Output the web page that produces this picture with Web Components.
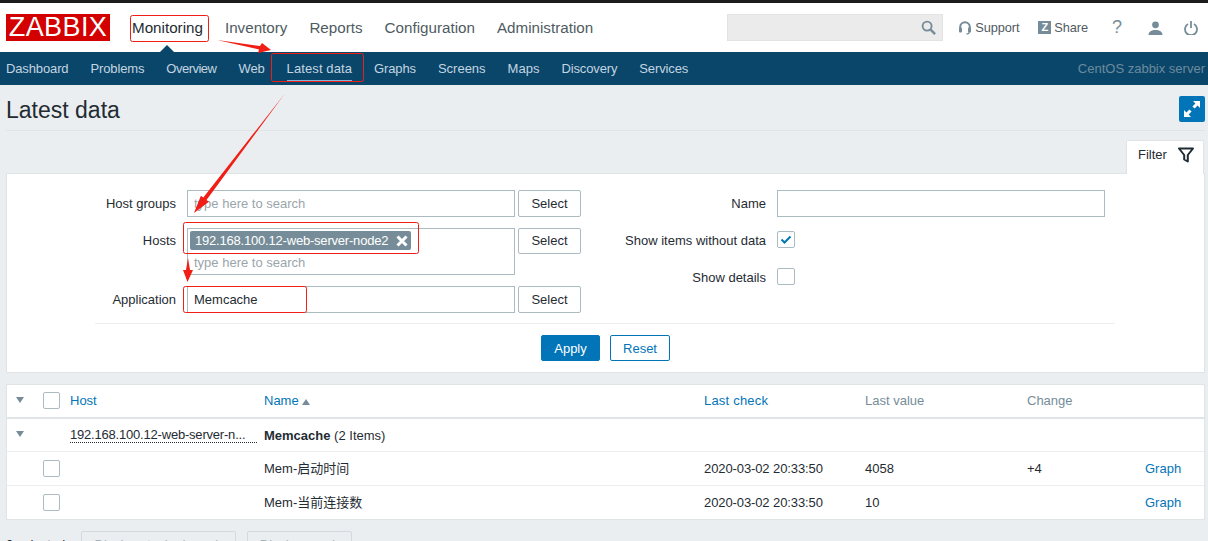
<!DOCTYPE html>
<html>
<head>
<meta charset="utf-8">
<title>Latest data</title>
<style>
    html, body {
        margin: 0;
        height: 541px;
        overflow: hidden;
        background-color: #ebeef0;
        font-family: "Liberation Sans", "Noto Sans CJK SC", Arial, sans-serif;
        font-size: 13px;
        color: #1f2c33;
    }
    a { color: inherit; text-decoration: none; }
    .sort {
        display: inline-block;
        margin-left: 3px;
        border: 4px solid transparent;
        border-top: 0;
        border-bottom: 6px solid #768d99;
    }
    .num { letter-spacing: -0.1px; }
</style>
</head>
<body>
<zbx-header></zbx-header>
<zbx-subnav server="CentOS zabbix server">
    <a>Dashboard</a><a>Problems</a><a style="letter-spacing:-0.5px">Overview</a><a>Web</a><a class="on" style="letter-spacing:0.1px">Latest data</a><a>Graphs</a><a style="letter-spacing:0">Screens</a><a style="letter-spacing:0">Maps</a><a>Discovery</a><a>Services</a>
</zbx-subnav>
<zbx-title>Latest data</zbx-title>
<zbx-filter></zbx-filter>
<zbx-table>
    <zbx-row kind="head">
        <span slot="host">Host</span>
        <span slot="name">Name<i class="sort"></i></span>
        <span slot="check" style="letter-spacing:0.2px">Last check</span>
        <span slot="value">Last value</span>
        <span slot="change">Change</span>
    </zbx-row>
    <zbx-row kind="group">
        <span slot="host">192.168.100.12-web-server-n...</span>
        <span slot="name"><b>Memcache</b> (2 Items)</span>
    </zbx-row>
    <zbx-row kind="item">
        <span slot="name">Mem-启动时间</span>
        <span slot="check" class="num">2020-03-02 20:33:50</span>
        <span slot="value">4058</span>
        <span slot="change">+4</span>
        <span slot="action">Graph</span>
    </zbx-row>
    <zbx-row kind="item">
        <span slot="name">Mem-当前连接数</span>
        <span slot="check" class="num">2020-03-02 20:33:50</span>
        <span slot="value">10</span>
        <span slot="action">Graph</span>
    </zbx-row>
</zbx-table>
<zbx-footer></zbx-footer>
<zbx-marks></zbx-marks>

<script>
class ZbxHeader extends HTMLElement {
    constructor() {
        super();
        this.attachShadow({ mode: 'open' }).innerHTML = `
            <style>
                :host {
                    display: flex;
                    align-items: center;
                    height: 49px;
                    border-top: 3px solid #1c1c1c;
                    background-color: #fff;
                    position: relative;
                }
                .logo {
                    width: 104px;
                    height: 27px;
                    margin-left: 6px;
                    background-color: #d40000;
                    color: #fff;
                    font-size: 27px;
                    line-height: 27px;
                    letter-spacing: 0.4px;
                    text-align: center;
                }
                nav { display: flex; gap: 22px; margin-left: 22px; font-size: 15.2px; color: #4f5b62; }
                nav a:first-child { color: #1f2c33; }
                .pointer {
                    position: absolute;
                    left: 160px;
                    bottom: 0;
                    border: 7px solid transparent;
                    border-top: 0;
                    border-bottom: 7px solid #0a466a;
                }
                .right { display: flex; align-items: center; margin-left: auto; color: #4f5b62; font-size: 12.8px; letter-spacing: -0.1px; }
                .search {
                    box-sizing: border-box;
                    width: 216px;
                    height: 27px;
                    margin-right: 16px;
                    background-color: #ebebeb;
                    border: 1px solid #e3e3e3;
                    display: flex;
                    align-items: center;
                    justify-content: flex-end;
                    padding-right: 6px;
                }
                .tool { display: flex; align-items: center; gap: 4px; }
                .z {
                    width: 13px;
                    height: 13px;
                    background-color: #768d99;
                    color: #fff;
                    font-weight: bold;
                    font-size: 11px;
                    line-height: 13px;
                    text-align: center;
                }
                svg { display: block; }
            </style>
            <div class="logo">ZABBIX</div>
            <nav>
                <a>Monitoring</a><a>Inventory</a><a>Reports</a><a>Configuration</a><a>Administration</a>
            </nav>
            <i class="pointer"></i>
            <div class="right">
                <div class="search">
                    <svg width="15" height="15" viewBox="0 0 16 16" fill="none" stroke="#768d99" stroke-width="2"><circle cx="6.500" cy="6.500" r="4.800"/><path d="M10 10l5 5" stroke-width="2.600"/></svg>
                </div>
                <div class="tool" style="margin-right:19px">
                    <svg width="12" height="14" viewBox="0 0 12 14" fill="none" stroke="#768d99" stroke-width="2"><path d="M1.200 8V6a4.800 4.800 0 0 1 9.600 0v2"/><rect x="0" y="6.500" width="3" height="5" rx="1" fill="#768d99" stroke="none"/><rect x="9" y="6.500" width="3" height="5" rx="1" fill="#768d99" stroke="none"/><path d="M10.300 11c0 1.400-1.400 2-3 2" stroke-width="1.200"/></svg>
                    <span>Support</span>
                </div>
                <div class="tool" style="margin-right:22px;gap:3px">
                    <span class="z">Z</span>
                    <span>Share</span>
                </div>
                <span style="width:14px;margin-right:24px;font-size:18px;color:#768d99;text-align:center">?</span>
                <svg style="margin-right:21px" width="15" height="14" viewBox="0 0 15 14" fill="#768d99"><circle cx="7.500" cy="3.800" r="3.400"/><path d="M0.500 14c0-3.500 3-5 7-5s7 1.500 7 5z"/></svg>
                <svg style="margin-right:10px" width="14" height="14" viewBox="0 0 14 14" fill="none" stroke="#768d99" stroke-width="1.800"><path d="M4 3a6 6 0 1 0 6 0"/><path d="M7 0v7"/></svg>
            </div>
        `;
    }
}

class ZbxSubnav extends HTMLElement {
    constructor() {
        super();
        this.attachShadow({ mode: 'open' }).innerHTML = `
            <style>
                :host {
                    display: flex;
                    align-items: center;
                    box-sizing: border-box;
                    height: 33px;
                    padding: 0 3px 1px 6px;
                    background-color: #0a466a;
                    color: #c3d5e0;
                    font-size: 13px;
                }
                .items { display: flex; gap: 22px; letter-spacing: -0.13px; }
                ::slotted(a.on) {
                    color: #fff;
                    box-shadow: 0 2px 0 #7fb5dc;
                    padding-bottom: 4px;
                    margin-bottom: -4px;
                }
                .server { margin-left: auto; color: #6c8b9d; }
            </style>
            <div class="items"><slot></slot></div>
            <span class="server"></span>
        `;
        this.shadowRoot.querySelector('.server').textContent = this.getAttribute('server');
    }
}

class ZbxTitle extends HTMLElement {
    constructor() {
        super();
        this.attachShadow({ mode: 'open' }).innerHTML = `
            <style>
                :host {
                    display: flex;
                    align-items: center;
                    justify-content: space-between;
                    height: 42px;
                    padding-top: 3px;
                    margin: 0 3px 0 6px;
                    border-bottom: 1px solid #dfe4e7;
                    font-size: 23px;
                    color: #1f2c33;
                }
                .text { padding-top: 2px; }
                .full {
                    width: 26px;
                    height: 26px;
                    background-color: #0275b8;
                    border-radius: 2px;
                }
                svg { display: block; }
            </style>
            <span class="text"><slot></slot></span>
            <div class="full">
                <svg width="26" height="26" viewBox="0 0 26 26" fill="#fff"><path d="M21 5v7l-2.400-2.400-3 3-2.200-2.200 3-3L14 5z"/><path d="M5 21v-7l2.400 2.400 3-3 2.200 2.200-3 3L12 21z"/></svg>
            </div>
        `;
    }
}

class ZbxField extends HTMLElement {
    constructor() {
        super();
        this.attachShadow({ mode: 'open' }).innerHTML = `
            <style>
                :host { display: contents; }
                label { text-align: right; line-height: 27px; color: #1f2c33; }
                :host([tall]) label { line-height: 25px; }
                .value { display: flex; align-items: flex-start; gap: 3px; min-height: 27px; }
            </style>
            <label></label>
            <div class="value"><slot></slot></div>
        `;
        this.shadowRoot.querySelector('label').textContent = this.getAttribute('label');
    }
}

class ZbxFilter extends HTMLElement {
    constructor() {
        super();
        this.attachShadow({ mode: 'open' }).innerHTML = `
            <style>
                :host { display: block; margin: 9px 3px 0 6px; }
                .tabs { display: flex; justify-content: flex-end; }
                .tab {
                    display: flex;
                    align-items: flex-start;
                    gap: 11px;
                    box-sizing: border-box;
                    width: 78px;
                    height: 34px;
                    margin-right: 1px;
                    margin-bottom: -1px;
                    padding: 6px 0 0 11px;
                    background-color: #fff;
                    border: 1px solid #dfe4e7;
                    border-bottom: 0;
                    border-radius: 2px 2px 0 0;
                    position: relative;
                    line-height: 16px;
                }
                .panel {
                    box-sizing: border-box;
                    height: 200px;
                    background-color: #fff;
                    border: 1px solid #dfe4e7;
                }
                .cols { display: flex; padding-top: 16px; }
                .form {
                    display: grid;
                    grid-template-columns: var(--label) auto;
                    column-gap: 11px;
                    align-content: start;
                }
                .left { --label: 169px; width: 574px; row-gap: 11px; }
                .right { --label: 185px; row-gap: 10px; }
                input {
                    box-sizing: border-box;
                    width: 328px;
                    height: 27px;
                    margin: 0;
                    padding: 0 6px;
                    border: 1px solid #acbbc2;
                    border-radius: 0;
                    outline: 0;
                    font: inherit;
                    color: #1f2c33;
                    background-color: #fff;
                }
                input::placeholder { color: #9aa5aa; opacity: 1; }
                .multi {
                    box-sizing: border-box;
                    width: 328px;
                    height: 47px;
                    border: 1px solid #acbbc2;
                    padding: 2px;
                }
                .tag {
                    display: inline-flex;
                    align-items: center;
                    height: 19px;
                    padding: 0 3px 0 5px;
                    gap: 8px;
                    background-color: #768d99;
                    color: #fff;
                    border-radius: 2px;
                    letter-spacing: -0.2px;
                }
                .tag svg { display: block; }
                .hint { color: #9aa5aa; padding: 5px 0 0 4px; line-height: 16px; }
                .sep { height: 1px; margin: 10px 89px 0 88px; background-color: #ebeef0; }
                .actions { display: flex; justify-content: center; gap: 10px; margin-top: 11px; }
                .check {
                    box-sizing: border-box;
                    width: 18px;
                    height: 17px;
                    margin-top: 4px;
                    border: 1px solid #acbbc2;
                    border-radius: 2px;
                }
                .check svg { display: block; }
                zbx-button.sel { width: 63px; }
            </style>
            <div class="tabs">
                <div class="tab">
                    <span>Filter</span>
                    <svg width="16" height="16" viewBox="0 0 16 16" fill="none" stroke="#1f2c33" stroke-width="2" stroke-linejoin="round"><path d="M1 1.500h14L9.800 8v6.500l-3.600-2V8z"/></svg>
                </div>
            </div>
            <div class="panel">
                <div class="cols">
                    <div class="form left">
                        <zbx-field label="Host groups"><input placeholder="type here to search"><zbx-button class="sel">Select</zbx-button></zbx-field>
                        <zbx-field label="Hosts" tall>
                            <div class="multi">
                                <span class="tag">192.168.100.12-web-server-node2
                                    <svg width="12" height="12" viewBox="0 0 12 12" stroke="#fff" stroke-width="3"><path d="M1.500 1.500l9 9M10.500 1.500l-9 9"/></svg>
                                </span>
                                <div class="hint">type here to search</div>
                            </div>
                            <zbx-button class="sel" style="height:26px;line-height:23px">Select</zbx-button>
                        </zbx-field>
                        <zbx-field label="Application"><input value="Memcache"><zbx-button class="sel">Select</zbx-button></zbx-field>
                    </div>
                    <div class="form right">
                        <zbx-field label="Name"><input></zbx-field>
                        <zbx-field label="Show items without data">
                            <div class="check"><svg width="16" height="15" viewBox="0 0 16 15" fill="none" stroke="#0275b8" stroke-width="2"><path d="M3.500 7.500l3 3 6-6"/></svg></div>
                        </zbx-field>
                        <zbx-field label="Show details"><div class="check"></div></zbx-field>
                    </div>
                </div>
                <div class="sep"></div>
                <div class="actions">
                    <zbx-button kind="primary" style="width:59px;height:26px">Apply</zbx-button>
                    <zbx-button kind="link" style="width:60px;height:26px">Reset</zbx-button>
                </div>
            </div>
        `;
    }
}

class ZbxButton extends HTMLElement {
    constructor() {
        super();
        this.attachShadow({ mode: 'open' }).innerHTML = `
            <style>
                :host {
                    display: inline-block;
                    box-sizing: border-box;
                    height: 27px;
                    line-height: 25px;
                    text-align: center;
                    flex: none;
                    border: 1px solid #acbbc2;
                    border-radius: 2px;
                    background-color: #fff;
                    color: #1f2c33;
                }
                :host([kind="primary"]) { background-color: #0275b8; border-color: #0275b8; color: #fff; }
                :host([kind="link"]) { border-color: #0275b8; color: #0275b8; }
                :host([kind="off"]) { background-color: #ebeef0; border-color: #d3dade; color: #a5b1b8; }
            </style>
            <slot></slot>
        `;
    }
}

class ZbxTable extends HTMLElement {
    constructor() {
        super();
        this.attachShadow({ mode: 'open' }).innerHTML = `
            <style>
                :host {
                    display: block;
                    margin: 11px 3px 0 6px;
                    background-color: #fff;
                    border: 1px solid #dfe4e7;
                }
            </style>
            <slot></slot>
        `;
    }
}

class ZbxRow extends HTMLElement {
    constructor() {
        super();
        const kind = this.getAttribute('kind');
        const arrow = kind === 'item' ? '' : '<i class="arrow"></i>';
        const box = kind === 'group' ? '' : '<i class="box"></i>';
        this.attachShadow({ mode: 'open' }).innerHTML = `
            <style>
                :host {
                    display: grid;
                    grid-template-columns: 36px 27px 194px 440px 161px 162px 118px 1fr;
                    align-items: center;
                    height: 33px;
                    line-height: 15px;
                    border-top: 1px solid #ebeef0;
                    color: #1f2c33;
                }
                :host([kind="head"]) {
                    height: 30px;
                    padding-bottom: 2px;
                    border-top: 0;
                    border-bottom: 2px solid #dfe4e7;
                    color: #768d99;
                }
                :host([kind="group"]) { height: 32px; border-top: 0; }
                .arrow {
                    display: block;
                    width: 0;
                    margin-left: 9px;
                    border: 4px solid transparent;
                    border-bottom: 0;
                    border-top: 6px solid #768d99;
                }
                :host([kind="group"]) .arrow { margin-top: -3px; }
                .box {
                    display: block;
                    box-sizing: border-box;
                    width: 17px;
                    height: 17px;
                    border: 1px solid #acbbc2;
                    border-radius: 2px;
                }
                :host([kind="group"]) ::slotted([slot="host"]) {
                    display: block;
                    width: 187px;
                    white-space: nowrap;
                    letter-spacing: -0.2px;
                    border-bottom: 1px dotted #1f2c33;
                }
                :host([kind="head"]) ::slotted([slot="host"]),
                :host([kind="head"]) ::slotted([slot="name"]),
                :host([kind="head"]) ::slotted([slot="check"]),
                ::slotted([slot="action"]) { color: #0275b8; }
            </style>
            <div>${arrow}</div>
            <div>${box}</div>
            <div><slot name="host"></slot></div>
            <div><slot name="name"></slot></div>
            <div><slot name="check"></slot></div>
            <div><slot name="value"></slot></div>
            <div><slot name="change"></slot></div>
            <div><slot name="action"></slot></div>
        `;
    }
}

class ZbxFooter extends HTMLElement {
    constructor() {
        super();
        this.attachShadow({ mode: 'open' }).innerHTML = `
            <style>
                :host {
                    display: flex;
                    align-items: center;
                    margin: 11px 0 0 6px;
                    color: #1f2c33;
                }
                span { width: 75px; }
            </style>
            <span>0 selected</span>
            <zbx-button kind="off" style="width:155px">Display stacked graph</zbx-button>
            <zbx-button kind="off" style="width:105px;margin-left:11px">Display graph</zbx-button>
        `;
    }
}

class ZbxMarks extends HTMLElement {
    constructor() {
        super();
        this.attachShadow({ mode: 'open' }).innerHTML = `
            <style>
                :host { position: absolute; left: 0; top: 0; width: 1208px; height: 541px; pointer-events: none; }
                svg { display: block; }
            </style>
            <svg width="1208" height="541" viewBox="0 0 1208 541">
                <g fill="none" stroke="#f01e14" stroke-width="1">
                    <rect x="130.500" y="15.500" width="78" height="26" rx="2"/>
                    <rect x="271.500" y="53.500" width="92" height="28" rx="2"/>
                    <rect x="183.500" y="222.500" width="235" height="31" rx="2"/>
                    <rect x="183.500" y="286.500" width="123" height="26" rx="2"/>
                </g>
                <g fill="#f01e14">
                    <path d="M217 40L260 46L262 43L271 50L258 53L259 49.500Z"/>
                    <path d="M284.500 94L206.500 199.900L208.900 201.700L194 213L200.900 195.700L203.300 197.500Z"/>
                    <path d="M188 258L190 270L193 270L187.500 282L183 270L186 270Z"/>
                </g>
            </svg>
        `;
    }
}

customElements.define('zbx-header', ZbxHeader);
customElements.define('zbx-subnav', ZbxSubnav);
customElements.define('zbx-title', ZbxTitle);
customElements.define('zbx-field', ZbxField);
customElements.define('zbx-button', ZbxButton);
customElements.define('zbx-filter', ZbxFilter);
customElements.define('zbx-table', ZbxTable);
customElements.define('zbx-row', ZbxRow);
customElements.define('zbx-footer', ZbxFooter);
customElements.define('zbx-marks', ZbxMarks);
</script>
</body>
</html>
